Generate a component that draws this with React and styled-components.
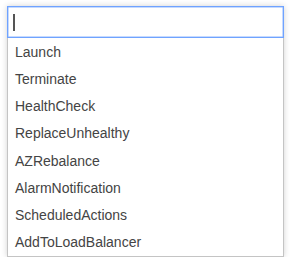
import React from "react";
import styled, { createGlobalStyle } from "styled-components";

const Global = createGlobalStyle`
  html, body { margin: 0; padding: 0; background: #fff; }
  body { font-family: "Liberation Sans", Arial, sans-serif; }
`;

const Page = styled.div`
  padding: 6px 9px 0 7px;
`;

const Combo = styled.div`
  width: 277px;
  box-shadow: 0 0 6px rgba(0, 0, 0, 0.18);
`;

const Field = styled.div`
  height: 30px;
  border: 1px solid #6fa3ff;
  box-shadow: inset 0 0 0 0.5px #8db6ff;
  display: flex;
  align-items: center;
  padding-left: 5px;
  background: #fff;
`;

const Caret = styled.span`
  display: block;
  width: 2px;
  height: 17px;
  background: #555;
`;

const List = styled.ul`
  list-style: none;
  margin: 0;
  padding: 0 0 0 0;
  border: 1px solid #c4c4c4;
  border-top: none;
  background: #fff;
`;

const Item = styled.li`
  height: 27.25px;
  display: flex;
  align-items: center;
  padding-left: 7px;
  font-size: 14px;
  color: #444;
`;

const items = [
  "Launch",
  "Terminate",
  "HealthCheck",
  "ReplaceUnhealthy",
  "AZRebalance",
  "AlarmNotification",
  "ScheduledActions",
  "AddToLoadBalancer",
];

export default function App() {
  return (
    <>
      <Global />
      <Page>
        <Combo>
          <Field>
            <Caret />
          </Field>
          <List>
            {items.map((t) => (
              <Item key={t}>{t}</Item>
            ))}
          </List>
        </Combo>
      </Page>
    </>
  );
}
